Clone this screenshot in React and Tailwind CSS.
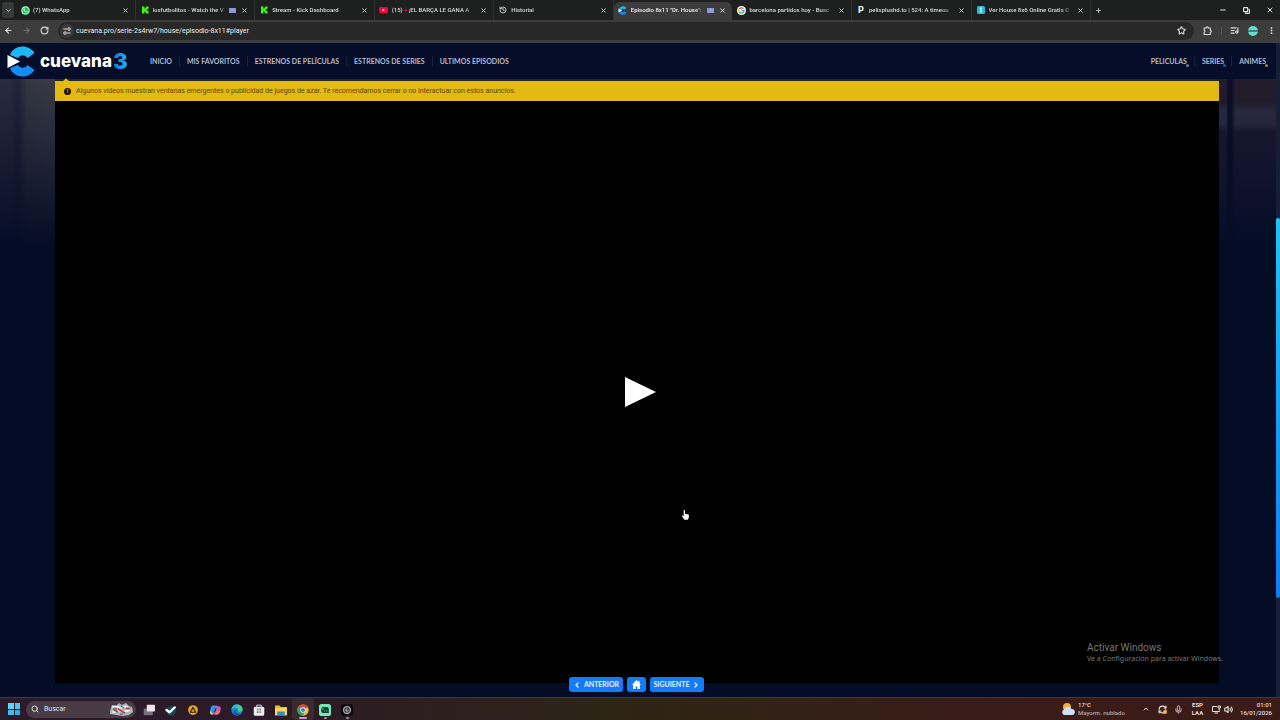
import {
  ArrowLeft, ArrowRight, ChevronDown, ChevronLeft, ChevronRight, ChevronUp, Copy, EllipsisVertical, History, ListMusic,
  Mic, Minus, Plus, RotateCw, Search, Star, X, Volume2, RefreshCw,
} from 'lucide-react'
import { FaWhatsapp } from 'react-icons/fa'

function KickIcon() {
  return (
    <svg viewBox="0 0 8 8" className="size-2" fill="#3df51b">
      <path d="M1 .5h2.400v1.900h.9v-.9h.9v-1h2.400v2.200h-.9v.9h-.9v.8h.9v.9h.9v2.200H5.200v-1h-.9v-.9h-.9v1.900H1z" />
    </svg>
  )
}

function YoutubeIcon() {
  return (
    <svg viewBox="0 0 9 8" className="h-2 w-[9px]">
      <rect y="1" width="9" height="6" rx="1.500" fill="#f4043c" />
      <path d="M3.600 2.700v2.600L5.900 4z" fill="#fff" />
    </svg>
  )
}

function GoogleIcon() {
  return (
    <svg viewBox="0 0 16 16" className="size-[9px]" fill="none" strokeWidth="2.200">
      <circle cx="8" cy="8" r="8" fill="#fff" />
      <path d="M11.500 4.600A4.700 4.700 0 0 0 4 5.600" stroke="#ea4335" />
      <path d="M4 5.600a4.700 4.700 0 0 0 0 4.800" stroke="#fbbc05" />
      <path d="M4 10.400a4.700 4.700 0 0 0 7 1" stroke="#34a853" />
      <path d="M11 11.400A4.700 4.700 0 0 0 12.700 8H8" stroke="#4285f4" />
    </svg>
  )
}

function CuevanaMark({ className }) {
  return (
    <svg viewBox="0 0 28 31" className={className}>
      <path d="M3 9C5 3.500 10 .5 15.500.5 20.500.5 25 3 27.500 7L20.500 12c-1.200-1.800-2.800-2.700-4.700-2.700-2 0-3.600.8-4.800 2.700z" fill="#1cb8f6" />
      <path d="M3 22c2 5.500 7 8.500 12.500 8.500 5 0 9.500-2.500 12-6.500l-7-5c-1.200 1.800-2.800 2.700-4.700 2.700-2 0-3.600-.8-4.800-2.700z" fill="#148cf8" />
      <path d="M.5 9 13 15.500.5 22z" fill="#fff" />
    </svg>
  )
}

const tabs = [
  { title: '(7) WhatsApp', icon: <FaWhatsapp className="size-[9px] rounded-full bg-[#25c05c] text-white" /> },
  { title: 'losfutbolitos - Watch the V', icon: <KickIcon />, media: true },
  { title: 'Stream - Kick Dashboard', icon: <KickIcon /> },
  { title: <>(15) <span className="text-[#f4043c]">♦</span> ¡EL BARÇA LE GANA A</>, icon: <YoutubeIcon /> },
  { title: 'Historial', icon: <History className="size-2 text-[#c8c8c8]" strokeWidth={3} /> },
  { title: 'Episodio 8x11 "Dr. House":', icon: <CuevanaMark className="size-[9px]" />, media: true, active: true },
  { title: 'barcelona partidos hoy - Busc', icon: <GoogleIcon /> },
  { title: 'pelisplushd.to | 524: A timeou', icon: <b className="text-[9px] text-white">P</b> },
  {
    title: 'Ver House 8x6 Online Gratis C',
    icon: (
      <svg viewBox="0 0 8 8" className="size-2">
        <rect width="8" height="8" rx="1.500" fill="#28b8dc" />
        <path d="M2.500 2h3M4 2v4M2.500 6h3M3 4h2" stroke="#d8f6ff" strokeWidth=".8" />
      </svg>
    ),
  },
]

function Tab({ title, icon, media, active }) {
  return (
    <div className={`flex min-w-0 flex-1 items-center pr-[6px] pl-1 ${active ? 'mt-[2px] rounded-t-md bg-[#3b3c3b] pb-[2px] text-[#f0f0f0]' : 'border-r border-[#303332] text-[#d8dad9]'}`}>
      <span className="flex w-[10px] shrink-0 items-center justify-center">{icon}</span>
      <button className="ml-[3px] min-w-0 flex-1 whitespace-nowrap text-left text-[6px] font-medium [mask-image:linear-gradient(to_right,#000_84%,#0003)]">
        {title}
      </button>
      {media && <span className="mx-px flex h-[5px] w-[7px] items-center justify-center bg-[#8595d8] text-[#e4e8ff]"><Minus className="size-1" /></span>}
      <button aria-label="Cerrar pestaña" className="ml-1 shrink-0"><X className="size-[7px]" strokeWidth={3} /></button>
    </div>
  )
}

function Browser() {
  return (
    <div className="shrink-0 font-[Roboto,sans-serif] text-[7px] leading-[10px]">
      <div className="flex h-5 bg-[#1d201f]">
        <button aria-label="Buscar pestañas" className="m-[2px] mr-0 flex w-3 items-center justify-center rounded bg-[#373938] text-[#ddd]">
          <ChevronDown className="size-[7px]" strokeWidth={3} />
        </button>
        <div className="ml-[2px] flex w-[1075px] min-w-0">
          {tabs.map((tab, i) => <Tab key={i} {...tab} />)}
        </div>
        <button aria-label="Nueva pestaña" className="ml-1 text-[#ccc]"><Plus className="size-[7px]" strokeWidth={3} /></button>
        <div className="ml-auto flex items-center gap-4 pr-[6px] text-[#e4e4e4]">
          <button aria-label="Minimizar"><Minus className="size-2" strokeWidth={3} /></button>
          <button aria-label="Restaurar"><Copy className="size-[7px] -scale-x-100 rotate-90" strokeWidth={4} /></button>
          <button aria-label="Cerrar"><X className="size-2" strokeWidth={3} /></button>
        </div>
      </div>
      <div className="flex h-[23px] items-center border-b-2 border-[#393f44] bg-[#3b3c3b] pr-1 pl-1 text-[#d8d8d8]">
        <button aria-label="Atrás"><ArrowLeft className="size-[9px]" strokeWidth={3} /></button>
        <button aria-label="Adelante" className="ml-[9px] text-[#6b6c6b]"><ArrowRight className="size-[9px]" strokeWidth={3} /></button>
        <button aria-label="Recargar" className="ml-[9px]"><RotateCw className="size-[9px]" strokeWidth={3} /></button>
        <div className="ml-[9px] flex h-[18px] flex-1 items-center rounded-full bg-[#282828] pr-2 pl-[2px]">
          <span className="flex size-[14px] items-center justify-center rounded-full bg-[#393a39]">
            <svg viewBox="0 0 16 16" className="size-2" fill="none" stroke="currentColor" strokeWidth="2">
              <path d="M1 4h7M8 12h7" /><circle cx="12" cy="4" r="2.500" /><circle cx="4" cy="12" r="2.500" />
            </svg>
          </span>
          <input aria-label="Dirección" defaultValue="cuevana.pro/serie-2s4rw7/house/episodio-8x11#player" className="ml-[2px] min-w-0 flex-1 bg-transparent text-[#ececec] outline-none" />
          <button aria-label="Favorito"><Star className="size-[9px]" strokeWidth={3} /></button>
        </div>
        <button aria-label="Extensiones" className="ml-[9px]">
          <svg viewBox="0 0 16 16" className="size-[9px]" fill="none" stroke="currentColor" strokeWidth="2">
            <path d="M2 3.500h3.500C5.500 1 9.500 1 9.500 3.500H13v4c2.500 0 2.500 3.500 0 3.500v4H2v-4c2-.5 2-3.500 0-4z" strokeLinejoin="round" />
          </svg>
        </button>
        <span className="ml-[9px] h-2 w-px bg-[#555]" />
        <button aria-label="Multimedia" className="ml-2"><ListMusic className="size-[9px]" strokeWidth={3} /></button>
        <button aria-label="Perfil" className="ml-[9px] flex size-[10px] items-center rounded-full bg-[#66dccb]">
          <span className="h-[2px] w-full bg-[#3c8174]" />
        </button>
        <button aria-label="Menú" className="ml-[9px]"><EllipsisVertical className="size-[9px]" strokeWidth={3} /></button>
      </div>
    </div>
  )
}

const menu = ['INICIO', 'MIS FAVORITOS', 'ESTRENOS DE PELÍCULAS', 'ESTRENOS DE SERIES', 'ULTIMOS EPISODIOS']
const sections = [
  { name: 'PELICULAS', dot: 'bg-[#62808a]' },
  { name: 'SERIES', dot: 'bg-[#225c88]' },
  { name: 'ANIMES', dot: 'bg-[#8c8263]' },
]

function SiteHeader() {
  return (
    <header className="flex h-9 shrink-0 items-center bg-[#050d28] pr-[3px] pl-[7px] text-[7px] font-bold text-[#b4bacd]">
      <a href="#inicio" className="flex w-[122px] items-center">
        <CuevanaMark className="h-[31px] w-7" />
        <span className="ml-[5px] font-[Inter,sans-serif] text-[17px] leading-6 font-extrabold text-white">cuevana</span>
        <span className="ml-px bg-linear-to-r from-[#1a72dc] to-[#27b0ee] bg-clip-text font-[Inter,sans-serif] text-[22px] leading-6 font-black text-transparent">3</span>
      </a>
      <nav className="ml-[14px] flex divide-x divide-[#18213f]">
        {menu.map((item) => <a key={item} href="#menu" className="px-[7px] leading-[10px] whitespace-nowrap">{item}</a>)}
      </nav>
      <nav className="ml-auto flex divide-x divide-[#18213f]">
        {sections.map(({ name, dot }) => (
          <a key={name} href="#seccion" className="relative px-[7px] leading-[10px]">
            {name}
            <span className={`absolute right-[5px] -bottom-px size-[3px] rounded-full ${dot}`} />
          </a>
        ))}
      </nav>
    </header>
  )
}

function Player() {
  return (
    <main className="flex min-h-0 flex-1 flex-col bg-[#050d26]">
      <div className="flex min-h-0 flex-1">
        <div className="h-[165px] w-[55px] shrink-0 bg-[linear-gradient(to_bottom,transparent,#050d26),linear-gradient(to_right,#292b40,#292b40_20%,#202237_32%,#353743_50%,#393b45)]" />
        <section className="flex min-w-0 flex-1 flex-col border-t-2 border-[#29251f]">
          <div className="relative flex h-5 shrink-0 items-center bg-[#e3ba12] pl-[9px] font-[Roboto,sans-serif] text-[7px] text-[#56450a]">
            <span className="absolute -top-[2px] left-[9px] size-1 rotate-45 bg-[#e3ba12]" />
            <span className="flex size-[7px] items-center justify-center rounded-full bg-[#1b1500] text-[6px] leading-none font-bold text-[#e3ba12]">!</span>
            <p className="ml-[5px] whitespace-nowrap">
              Algunos videos muestran ventanas emergentes o publicidad de juegos de azar. Te recomendamos cerrar o no interactuar con estos anuncios.
            </p>
          </div>
          <div className="flex flex-1 items-center justify-center bg-black pl-[7px]">
            <button aria-label="Reproducir">
              <svg viewBox="0 0 31 30" className="h-[30px] w-[31px]" fill="#fff"><path d="M0 0v30l31-15z" /></svg>
            </button>
          </div>
        </section>
        <div className="h-[165px] w-[57px] shrink-0 bg-[linear-gradient(to_bottom,transparent_10%,#050d26),linear-gradient(to_right,transparent_12%,#0a0d25_16%,#0a0d25_22%,transparent_28%),linear-gradient(to_bottom,#221c2b_14%,#2c2c43_20%,#2c2c43_27%,#1c1b32_32%)]" />
      </div>
      <div className="relative -mt-[6px] flex h-5 shrink-0 justify-center gap-1 pr-[3px] text-[7px] font-bold text-[#e5f2ff]">
        <button className="flex h-[15px] w-[54px] items-center justify-center gap-[3px] rounded-[3px] bg-[#147cf8]">
          <ChevronLeft className="size-2" strokeWidth={4} />ANTERIOR
        </button>
        <button aria-label="Inicio" className="flex h-[15px] w-[19px] items-center justify-center rounded-[3px] bg-[#147cf8]">
          <svg viewBox="0 0 16 16" className="size-[9px]" fill="#fff"><path d="M8 0 0 8.500h2V16h4.500v-4.500h3V16H14V8.500h2L13.500 6V1.500h-2V4z" /></svg>
        </button>
        <button className="flex h-[15px] w-[54px] items-center justify-center gap-[3px] rounded-[3px] bg-[#147cf8]">
          SIGUIENTE<ChevronRight className="size-2" strokeWidth={4} />
        </button>
      </div>
    </main>
  )
}

const apps = [
  {
    name: 'Vista de tareas',
    art: <><rect x="1" y="6" width="12" height="9" fill="#777078" /><rect x="5" y="1" width="11" height="9" rx="1" fill="#eee4ea" /></>,
  },
  {
    name: 'Steam',
    art: <><circle cx="8" cy="9" r="6.500" fill="#154866" /><path d="M2 8 6 11l7-6.500" fill="none" stroke="#fff" strokeWidth="3" strokeLinecap="round" /></>,
  },
  {
    name: 'AIMP',
    art: <><circle cx="8" cy="8" r="6.500" fill="#e3a81c" /><path d="M8 4.500 11.500 11h-7z" fill="#e3a81c" stroke="#33250e" strokeWidth="1.600" strokeLinejoin="round" /></>,
  },
  {
    name: 'Copilot',
    art: (
      <>
        <path d="M5 2h6L7 14H4C0 14 1 10 2 7s1-5 3-5z" fill="#2b9bea" />
        <path d="M2 9 6 14H4C1 14 1 11 2 9z" fill="#e8c337" />
        <path d="M9 3h4c3 0 3 3 2 6s-2 5-4 5H6z" fill="#c75ac4" />
        <path d="M9.500 5.500 7 11" stroke="#2b1d29" strokeWidth="1.500" />
        <path d="M10 9h5c-1 3-2 5-4 5H8z" fill="#f17957" />
      </>
    ),
  },
  {
    name: 'Edge',
    art: (
      <>
        <circle cx="8" cy="8" r="7.500" fill="#1b7fd4" />
        <path d="M.5 8C1 3 4 .5 8 .5c5 0 7.500 3.500 7.500 6.500 0 3-4 4-6 2.500C10 6 8 5 5.500 5S1 6 .5 8z" fill="#43cf86" />
        <path d="M.5 8C1 3 4 .5 8 .5c1.500 0 2 .5 3 1L6 5C3 5 1 6 .5 8z" fill="#2bb9e6" />
        <path d="M6 8c-.5 4 3 6 7 5-3 3-8 2-9-1-.5-2 .5-3.500 2-4z" fill="#114a8c" />
      </>
    ),
  },
  {
    name: 'Microsoft Store',
    art: (
      <>
        <path d="M5 4V1.500h6V4" fill="none" stroke="#bcd8e8" strokeWidth="1.300" />
        <rect x="1" y="3.500" width="14" height="12" rx="2" fill="#f0eff2" />
        <path d="M5 6h2.500v2.500H5zM8.500 9.500H11V12H8.500z" fill="#d0863e" /><path d="M8.500 6H11v2.500H8.500zM5 9.500h2.500V12H5z" fill="#4a98bd" />
      </>
    ),
  },
  {
    name: 'Explorador',
    art: <><path d="M0 2h6l2 2h8v11H0z" fill="#f0b928" /><path d="M0 5.500h16V15H0z" fill="#fbd55c" /><path d="M3 10h10v5H3z" fill="#338bc8" /></>,
  },
  {
    name: 'Chrome',
    open: 'w-2 bg-[#cf9bc9]',
    art: (
      <>
        <circle cx="8" cy="8" r="7.500" fill="#f2c230" />
        <path d="M8 8 1.500 4.250a7.500 7.500 0 0 1 13 0z" fill="#e34336" />
        <path d="M8 8 1.500 4.250A7.500 7.500 0 0 0 8 15.500L10 11z" fill="#2ea04f" />
        <circle cx="8" cy="8" r="3.700" fill="#fff" /><circle cx="8" cy="8" r="2.800" fill="#3c7fe8" />
      </>
    ),
  },
  {
    name: 'Streamlabs',
    open: 'w-[3px] bg-[#9a9095]',
    art: (
      <>
        <rect width="16" height="16" rx="3.500" fill="#72e8bd" />
        <path d="M4 4h6a3 3 0 0 1 3 3v5H6a3 3 0 0 1-3-3V7" fill="#10352c" />
        <path d="M7.500 8.500v1.500M10.500 8.500v1.500" stroke="#72e8bd" strokeWidth="1.200" /><path d="M3 6.500h4" stroke="#72e8bd" />
      </>
    ),
  },
  {
    name: 'Grabadora',
    open: 'w-[3px] bg-[#9a9095]',
    art: (
      <>
        <rect width="16" height="16" rx="3" fill="#0c0a0d" /><circle cx="8" cy="8" r="5.500" fill="#a8a4a9" />
        <circle cx="8" cy="8" r="3" fill="none" stroke="#3c383d" strokeWidth="1.500" /><path d="m8 8 2-2" stroke="#28252a" strokeWidth="1.500" />
      </>
    ),
  },
]

function Taskbar() {
  return (
    <footer className="flex h-[23px] shrink-0 items-center border-t border-[#45363f] bg-linear-to-r from-[#2b1a27] from-20% via-[#2d2516] via-48% to-[#3a1b18] to-80% px-2 font-[Roboto,sans-serif] text-[7px] leading-2 text-[#e6dfe0]">
      <button aria-label="Inicio" className="grid size-3 grid-cols-2 gap-px">
        <span className="bg-[#64d5f8]" /><span className="bg-[#4dc5f3]" /><span className="bg-[#43bcf1]" /><span className="bg-[#34aaeb]" />
      </button>
      <label className="ml-[6px] flex h-[17px] w-[110px] items-center rounded-full bg-[#493b45] pr-[2px] pl-[5px]">
        <Search className="size-2" strokeWidth={3} />
        <input type="text" defaultValue="Buscar" aria-label="Buscar" className="ml-[5px] w-12 min-w-0 flex-1 bg-transparent outline-none" />
        <svg viewBox="0 0 26 14" className="h-[14px] w-[26px]">
          <path d="M2 9 4 3l4 1 3-3 3 2 4-2 3 3 3 1 1 5-4 3-6 1-7-1-6-1z" fill="#a6b8bd" />
          <path d="M4 5c4-2 6 0 8 1s4-3 8-1M4 10c5 0 6-2 9-1s5 1 9-1" fill="none" stroke="#f5f2f0" strokeWidth="1.500" />
          <path d="m10 7 7 4M6 8l4 2M18 6l4 1" stroke="#bd3c43" strokeWidth="1.500" />
          <path d="M5 7h4M13 4l3 2M12 12h3" stroke="#38515d" />
        </svg>
      </label>
      <div className="ml-[2px] flex">
        {apps.map(({ name, art, open }) => (
          <button key={name} aria-label={name} className={`flex h-[22px] w-[22px] flex-col items-center justify-end gap-px ${name === 'Chrome' ? 'rounded bg-[#3a2a32]' : ''}`}>
            <svg viewBox="0 0 16 16" className="size-3">{art}</svg>
            <span className={`mb-px h-[2px] rounded-full ${open || 'w-0'}`} />
          </button>
        ))}
      </div>
      <div className="ml-auto flex items-center text-[6px] font-medium">
        <svg viewBox="0 0 14 14" className="size-[14px]">
          <circle cx="6" cy="5" r="4" fill="#f3ab3e" />
          <path d="M3 13a3 3 0 0 1 0-5.500 4 4 0 0 1 7.500-.5A3 3 0 0 1 11 13z" fill="#cfe0f6" />
        </svg>
        <p className="ml-[3px] w-[58px] whitespace-nowrap">17°C<br /><span className="text-[#b3a5a4]">Mayorm. nublado</span></p>
        <button aria-label="Iconos ocultos" className="ml-[6px]"><ChevronUp className="size-2" strokeWidth={3} /></button>
        <span className="relative ml-2"><RefreshCw className="size-[9px]" strokeWidth={3} /><span className="absolute right-0 bottom-0 size-1 rounded-full bg-[#f4b73b]" /></span>
        <Mic className="ml-[7px] size-[9px] text-[#b693a3]" strokeWidth={3} />
        <p className="ml-2 w-[13px] text-center font-bold">ESP<br />LAA</p>
        <svg viewBox="0 0 18 18" className="ml-2 size-[9px]" fill="none" stroke="currentColor" strokeWidth="2">
          <path d="M10 3H1v10h14v-2M5 16h7" /><path d="M12 2h5v4h-5zM14.500 6v5" />
        </svg>
        <Volume2 className="ml-[3px] size-[9px]" strokeWidth={3} />
        <p className="ml-[7px] w-8 text-right whitespace-nowrap">01:01<br />16/01/2026</p>
      </div>
    </footer>
  )
}

export default function App() {
  return (
    <div className="relative flex h-screen flex-col overflow-hidden bg-[#050d26] font-[Lato,sans-serif]">
      <Browser />
      <div className="flex min-h-0 flex-1">
        <div className="flex min-w-0 flex-1 flex-col">
          <SiteHeader />
          <Player />
        </div>
        <div className="w-1 shrink-0 bg-[#171e38] pt-[175px]">
          <div className="h-[380px] rounded-sm bg-linear-to-b from-[#20c4f8] to-[#147cf0]" />
        </div>
      </div>
      <Taskbar />
      <div className="pointer-events-none absolute right-[57px] bottom-[56px] font-['Noto_Sans',sans-serif] text-[#777]">
        <p className="font-[Roboto,sans-serif] text-[10px] leading-3">Activar Windows</p>
        <p className="text-[7px] leading-[10px]">Ve a Configuración para activar Windows.</p>
      </div>
      <svg viewBox="0 0 12 16" className="pointer-events-none absolute top-[509px] left-[681px] h-3 w-2" fill="#f5f5f5">
        <path d="M4 1c1-1 2 0 2 1v4l4 1c1 0 2 1 2 2 0 3-1 5-2 6H5C4 13 2 11 1 9c0-1 1-1 2 0l1 1z" />
      </svg>
    </div>
  )
}
